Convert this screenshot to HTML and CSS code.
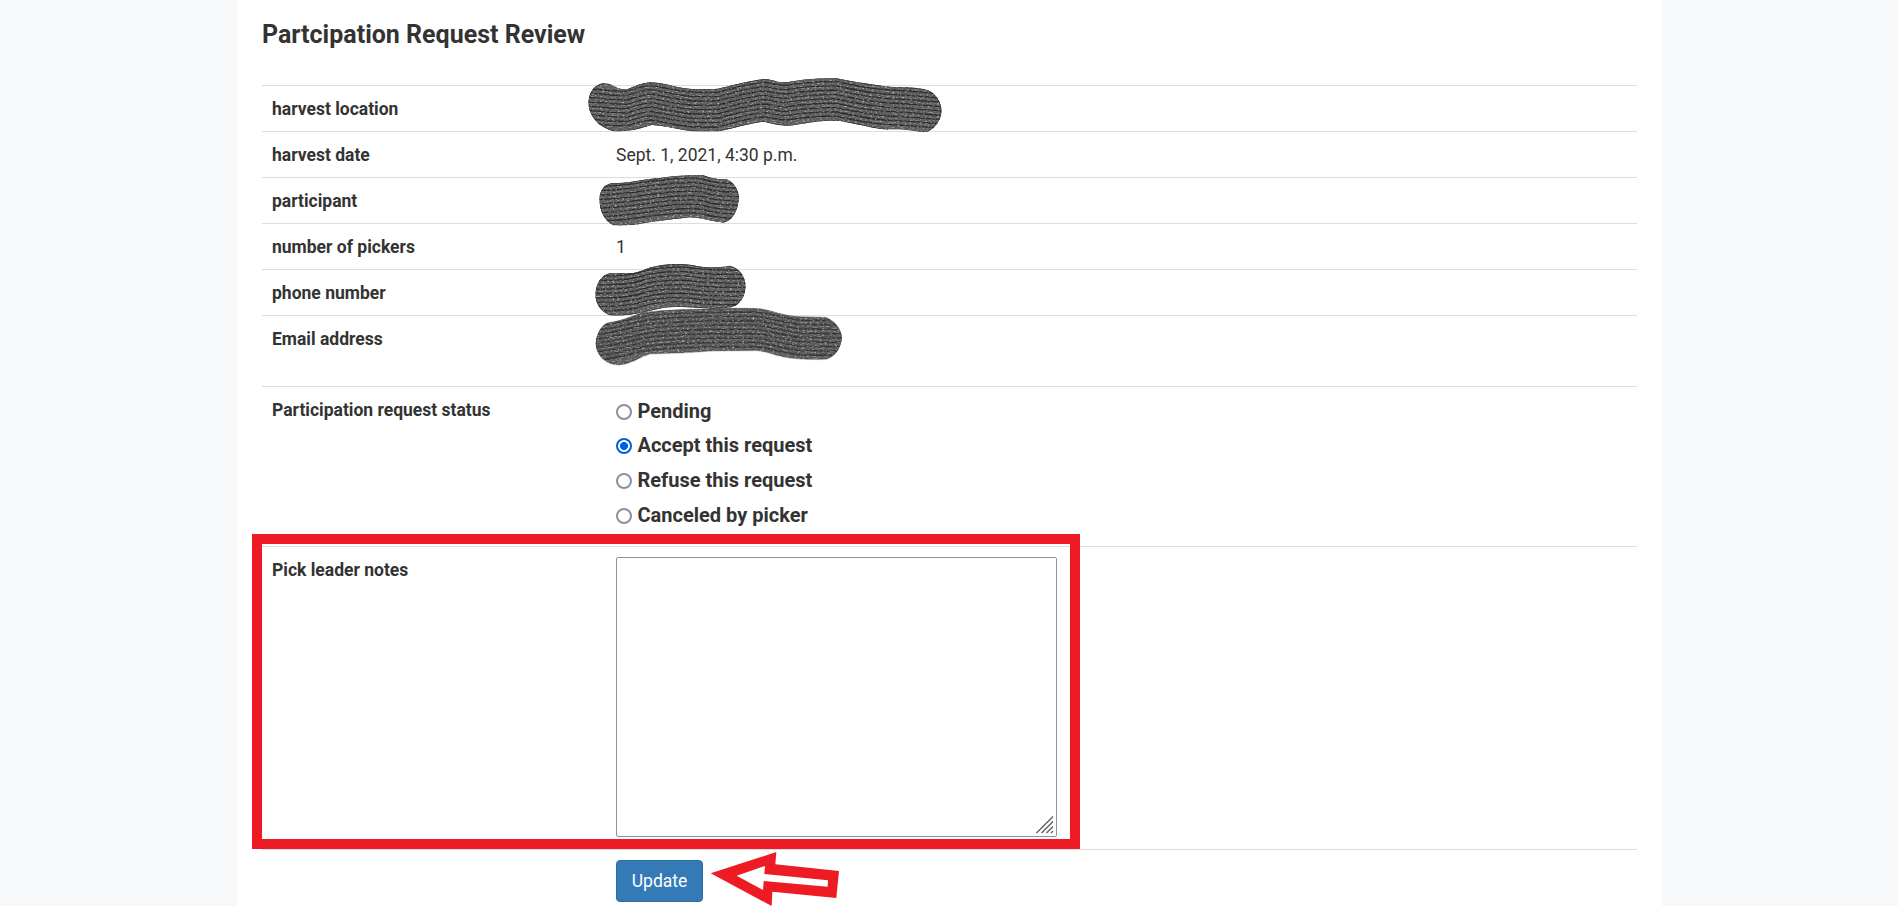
FILE: index.html
```html
<!DOCTYPE html>
<html lang="en">
<head>
<meta charset="utf-8">
<title>Participation Request Review</title>
<link rel="stylesheet" href="styles.css">
</head>
<body>
<main class="container">
  <h1 class="title">Partcipation Request Review</h1>
  <form class="table">
    <div class="row"><div class="name">harvest location</div><div class="value"></div></div>
    <div class="row"><div class="name">harvest date</div><div class="value">Sept. 1, 2021, 4:30 p.m.</div></div>
    <div class="row"><div class="name">participant</div><div class="value"></div></div>
    <div class="row"><div class="name">number of pickers</div><div class="value">1</div></div>
    <div class="row"><div class="name">phone number</div><div class="value"></div></div>
    <div class="row row-email"><div class="name">Email address</div><div class="value"></div></div>
    <div class="row row-status">
      <div class="name">Participation request status</div>
      <div class="value options">
        <label class="option"><input class="radio" type="radio" name="status">Pending</label>
        <label class="option"><input class="radio" type="radio" name="status" checked>Accept this request</label>
        <label class="option"><input class="radio" type="radio" name="status">Refuse this request</label>
        <label class="option"><input class="radio" type="radio" name="status">Canceled by picker</label>
      </div>
    </div>
    <div class="row row-notes">
      <div class="name">Pick leader notes</div>
      <div class="value">
        <div class="notes-box">
          <textarea class="notes"></textarea>
          <svg class="grip" viewBox="0 0 18 18"><path d="M17 .5L.5 17M17 5.500L5.500 17M17 10.500L10.500 17M17 15L15 17"/></svg>
        </div>
      </div>
    </div>
    <div class="row row-submit"><div class="name"></div><div class="value"><button class="update" type="button">Update</button></div></div>
  </form>
</main>
<svg class="annotations" viewBox="0 0 1898 906">
  <defs>
    <filter id="grain" x="0" y="0" width="100%" height="100%" color-interpolation-filters="sRGB">
      <feTurbulence type="fractalNoise" baseFrequency=".4 .8" numOctaves="2" seed="4" result="n"/>
      <feColorMatrix in="n" type="matrix" values="1.500 0 0 0 -.75 1.500 0 0 0 -.75 1.500 0 0 0 -.75 0 0 0 0 1" result="g"/>
      <feComposite in="SourceGraphic" in2="g" operator="arithmetic" k2="1" k3=".65" result="c"/>
      <feComposite in="c" in2="SourceGraphic" operator="in"/>
    </filter>
    <path id="o1" d="M25 95C28 65 45 42 70 40L90 42C105 50 115 58 140 58C165 50 180 38 215 37C260 38 290 57 350 58L400 58C450 50 500 32 555 27C580 28 590 38 620 37C660 28 720 23 770 25C820 35 880 45 930 50C980 52 1010 52 1035 58C1065 65 1085 95 1085 125C1082 150 1065 180 1035 187C1010 185 990 178 930 178C890 180 850 165 780 153C740 150 700 155 640 166C600 170 575 160 550 155C510 160 460 175 415 184L340 184C300 180 260 168 215 165C180 175 160 184 105 184C60 175 25 140 25 95Z"/>
    <path id="o2" d="M58 385C60 360 75 342 95 340C150 340 200 325 240 324C270 318 320 314 370 316C390 322 400 328 440 328C460 335 477 360 477 385C474 425 455 455 430 458C400 455 370 445 330 442C280 448 240 452 190 460C170 466 130 467 100 466C75 455 58 425 58 385Z"/>
    <path id="o3" d="M46 222C48 190 65 163 90 160L155 160C185 155 200 143 230 138C270 130 320 131 350 138C380 144 420 142 450 137C480 145 497 170 497 200C495 235 475 258 450 263L400 266C350 264 310 258 270 262C230 265 200 278 150 284C120 287 100 288 85 284C60 272 46 250 46 222Z"/>
    <path id="o4" d="M46 370C50 335 70 308 90 307C130 302 160 285 190 278C240 268 340 268 400 266C440 264 500 262 540 266C580 272 610 288 660 290L735 291C765 300 785 330 786 352C784 385 765 410 740 418C700 420 650 418 610 411C580 405 560 395 530 392L400 393C340 398 280 400 210 402C180 410 160 430 120 435C80 436 50 410 46 370Z"/>
    <path id="s1" d="M20 110C60 112 100 118 140 118C180 105 200 100 215 100C270 110 300 120 350 121L410 121C460 110 510 92 555 91C580 94 590 100 620 100C660 93 720 88 770 89C830 102 880 112 930 114C980 116 1040 122 1090 125"/>
    <path id="s2" d="M50 403C120 404 200 388 250 384C300 378 340 376 370 382C400 392 430 395 480 395"/>
    <path id="s3" d="M40 222C100 224 150 222 190 208C230 196 300 192 350 200C400 206 450 204 500 204"/>
    <path id="s4" d="M40 372C100 368 150 350 210 340C280 332 340 332 400 330L530 330C570 335 620 350 660 354L790 356"/>
    <clipPath id="c1"><use href="#o1"/></clipPath>
    <clipPath id="c2"><use href="#o2"/></clipPath>
    <clipPath id="c3"><use href="#o3"/></clipPath>
    <clipPath id="c4"><use href="#o4"/></clipPath>
  </defs>
  <g filter="url(#grain)">
    <g transform="translate(580 70) scale(.33333)">
      <g class="scribble" clip-path="url(#c1)"><use class="fill" href="#o1"/><use href="#s1" y="-54"/><use href="#s1" y="-41"/><use href="#s1" y="-28"/><use href="#s1" y="-15"/><use href="#s1" y="-2"/><use href="#s1" y="11"/><use href="#s1" y="24"/><use href="#s1" y="37"/><use href="#s1" y="50"/></g>
      <g class="scribble" clip-path="url(#c2)"><use class="fill" href="#o2"/><use href="#s2" y="-54"/><use href="#s2" y="-41"/><use href="#s2" y="-28"/><use href="#s2" y="-15"/><use href="#s2" y="-2"/><use href="#s2" y="11"/><use href="#s2" y="24"/><use href="#s2" y="37"/><use href="#s2" y="50"/></g>
    </g>
    <g transform="translate(580 220) scale(.33333)">
      <g class="scribble" clip-path="url(#c3)"><use class="fill" href="#o3"/><use href="#s3" y="-54"/><use href="#s3" y="-41"/><use href="#s3" y="-28"/><use href="#s3" y="-15"/><use href="#s3" y="-2"/><use href="#s3" y="11"/><use href="#s3" y="24"/><use href="#s3" y="37"/><use href="#s3" y="50"/></g>
      <g class="scribble" clip-path="url(#c4)"><use class="fill" href="#o4"/><use href="#s4" y="-54"/><use href="#s4" y="-41"/><use href="#s4" y="-28"/><use href="#s4" y="-15"/><use href="#s4" y="-2"/><use href="#s4" y="11"/><use href="#s4" y="24"/><use href="#s4" y="37"/><use href="#s4" y="50"/></g>
    </g>
  </g>
  <rect class="frame" x="257" y="539" width="818" height="305"/>
  <path class="arrow" transform="translate(600 820) scale(.33333)" d="M332 160L529 96L526 133L717 153L709 234L517 215L515 258ZM410 167L489 210L491 183L683 200L684 181L493 162L495 138Z"/>
</svg>
</body>
</html>
```
FILE: styles.css
```css
* { box-sizing: border-box; }
body {
  position: relative;
  margin: 0;
  height: 906px;
  overflow: hidden;
  background: #f6f8fa;
  color: #333;
  font: 17.5px/27px Roboto, sans-serif;
}
.container {
  width: 1425px;
  height: 906px;
  margin-left: 237px;
  padding: 20px 25px 0;
  background: #fff;
}
.title {
  height: 65px;
  margin: 0;
  font-size: 25px;
  line-height: 29px;
  font-weight: 700;
}
.row {
  display: grid;
  grid-template-columns: 344px 1fr;
  height: 46px;
  padding: 10px 0 0 10px;
  border-top: 1px solid #ddd;
}
.row-email { height: 71px; }
.row-status { height: 160px; }
.row-notes { height: 303px; }
.row-submit { height: 57px; }
.name { font-weight: 700; }
.options { display: flex; flex-direction: column; margin-top: -3.200px; }
.option {
  display: flex;
  align-items: center;
  gap: 5.500px;
  height: 34.750px;
  font-size: 20px;
  line-height: 25px;
  font-weight: 700;
}
.radio {
  appearance: none;
  width: 16px;
  height: 16px;
  margin: 1px 0 0;
  border: 2px solid #8f8f9d;
  border-radius: 50%;
  background: #fff;
}
.radio:checked {
  border-color: #0060df;
  background: radial-gradient(circle, #0060df 3.700px, #fff 4.300px);
}
.notes-box { position: relative; width: 441px; height: 280px; }
.notes {
  display: block;
  width: 441px;
  height: 280px;
  border: 1px solid #8f8f9d;
  border-radius: 2px;
  resize: none;
}
.grip {
  position: absolute;
  right: 3px;
  bottom: 3px;
  width: 18px;
  height: 18px;
  fill: none;
  stroke: #606068;
  stroke-width: 1.400;
}
.update {
  display: block;
  width: 87px;
  height: 42px;
  padding: 1px 0 0;
  border: 1px solid #2e6da4;
  border-radius: 4px;
  background: #337ab7;
  color: #fff;
  font: 17.5px/25px Roboto, sans-serif;
}
.annotations {
  position: absolute;
  top: 0;
  left: 0;
  width: 1898px;
  height: 906px;
  pointer-events: none;
}
.scribble { fill: none; stroke: #2a2a2a; stroke-width: 4; }
.fill { fill: #5c5c5c; stroke: #353535; }
.frame { fill: none; stroke: #ed1c24; stroke-width: 10; }
.arrow { fill: #ed1c24; fill-rule: evenodd; }
```
